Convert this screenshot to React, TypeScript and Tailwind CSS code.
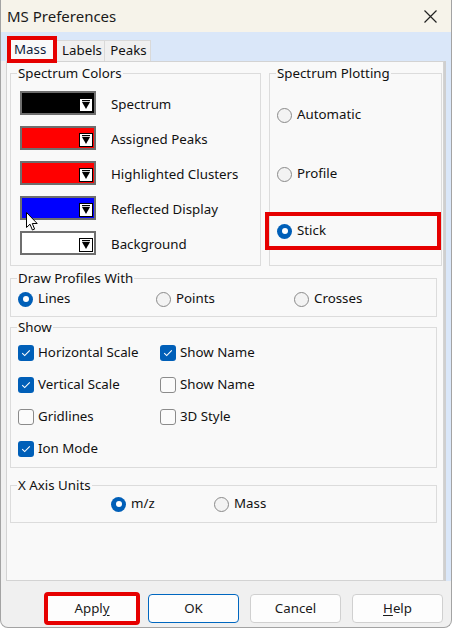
import React from "react";

const font = { fontFamily: '"Noto Sans", "Open Sans", sans-serif' };

type Swatch = { label: string; color: string };

const swatches: Swatch[] = [
  { label: "Spectrum", color: "bg-[#000000]" },
  { label: "Assigned Peaks", color: "bg-[#ff0000]" },
  { label: "Highlighted Clusters", color: "bg-[#ff0000]" },
  { label: "Reflected Display", color: "bg-[#0000ff]" },
  { label: "Background", color: "bg-[#ffffff]" },
];

const Radio = ({ checked }: { checked?: boolean }) =>
  checked ? (
    <span className="flex h-[15px] w-[15px] shrink-0 items-center justify-center rounded-full bg-[#005fb8]">
      <span className="h-[6px] w-[6px] rounded-full bg-white" />
    </span>
  ) : (
    <span className="h-[15px] w-[15px] shrink-0 rounded-full border border-[#8a8a8a] bg-[#f3f3f3]" />
  );

const RadioItem = ({ label, checked }: { label: string; checked?: boolean }) => (
  <div className="flex h-[16px] items-center gap-[5px]">
    <Radio checked={checked} />
    <span className="leading-none">{label}</span>
  </div>
);

const Check = ({ label, checked }: { label: string; checked?: boolean }) => (
  <div className="flex h-[16px] items-center gap-[4px]">
    {checked ? (
      <span className="flex h-[16px] w-[16px] shrink-0 items-center justify-center rounded-[3px] bg-[#005fb8]">
        <svg width="10" height="8" viewBox="0 0 10 8" fill="none">
          <path d="M1.2 4.2 L3.7 6.6 L8.8 1.4" stroke="white" strokeWidth="1.1" />
        </svg>
      </span>
    ) : (
      <span className="h-[16px] w-[16px] shrink-0 rounded-[3px] border border-[#8b8b8b] bg-[#fbfbfb]" />
    )}
    <span className="leading-none">{label}</span>
  </div>
);

const Group = ({
  title,
  className,
  children,
}: {
  title: string;
  className: string;
  children: React.ReactNode;
}) => (
  <fieldset className={`border border-[#dcdcdc] ${className}`}>
    <legend className="ml-[6px] px-[1px] text-[13.3px] leading-[16px]">{title}</legend>
    {children}
  </fieldset>
);

const ColorSwatch = ({ color }: { color: string }) => (
  <div className={`relative h-[24px] w-[76px] shrink-0 border-2 border-[#6e6e6e] ${color}`}>
    <span className="absolute bottom-[1px] right-[1px] flex h-[14px] w-[14px] items-start justify-center border border-black bg-white">
      <svg width="10" height="11" viewBox="0 0 10 11">
        <rect x="1" y="1" width="8" height="1.2" fill="black" />
        <path d="M1 3 L9 3 L5 10 Z" fill="black" />
      </svg>
    </span>
  </div>
);

// mouse pointer resting on the "Reflected Display" swatch
const Cursor = () => (
  <svg
    className="absolute left-[19px] top-[150px] z-20"
    width="13"
    height="20"
    viewBox="0 0 13 20"
  >
    <path
      d="M0.5 0.5 L0.5 15.5 L4 12.2 L6.4 18 L8.6 17.1 L6.3 11.5 L11.2 11.5 Z"
      fill="white"
      stroke="black"
      strokeWidth="1"
      strokeLinejoin="round"
    />
  </svg>
);

const Button = ({
  children,
  className,
}: {
  children: React.ReactNode;
  className?: string;
}) => (
  <button
    className={`flex h-[29px] w-[91px] items-center justify-center rounded-[4px] border bg-[#fdfdfd] text-[13.3px] text-[#1a1a1a] ${className ?? "border-[#d0d0d0]"}`}
  >
    {children}
  </button>
);

const App = () => {
  return (
    <div className="relative h-[633px] w-[452px] overflow-hidden bg-white text-[#111]" style={font}>
      <div className="flex h-[628px] flex-col overflow-hidden rounded-b-[8px] border-x border-b border-[#a3a3a3] bg-[#f0f0f0]">
        {/* title bar */}
        <div className="flex h-[32px] shrink-0 items-center justify-between bg-[#f6f3ea] pl-[6px] pr-[14px]">
          <span className="text-[15px] leading-none text-[#1a1a1a]">MS Preferences</span>
          <svg width="13" height="13" viewBox="0 0 13 13">
            <path d="M0.5 0.5 L12.5 12.5 M12.5 0.5 L0.5 12.5" stroke="#222" strokeWidth="1.2" />
          </svg>
        </div>

        {/* tab strip */}
        <div className="flex h-[29px] shrink-0 items-end bg-[#dae7f9] pl-[6px] text-[13.3px]">
          <div className="relative z-10 -mb-[2px] flex h-[27px] w-[50px] items-start border-4 border-[#e60000] bg-[#f9f9f9] pl-[3px] pt-[1px] leading-[17px] text-[#0d1a3a]">
            Mass
          </div>
          <div className="flex h-[21px] w-[48px] items-center justify-center border-r border-t border-[#d9d9d9] bg-[#f0f0f0] pl-[3px] leading-none">
            Labels
          </div>
          <div className="flex h-[21px] w-[46px] items-center justify-center border-r border-t border-[#d9d9d9] bg-[#f0f0f0] pl-[2px] leading-none">
            Peaks
          </div>
        </div>

        <div className="flex h-[520px] shrink-0">
          <div className="w-[5px] bg-[#f0f0f0]" />
          {/* tab page */}
          <div className="relative flex h-[520px] w-[438px] flex-col border border-[#d3d3d3] bg-[#f9f9f9] pl-[3px] text-[13.3px] shadow-[2px_0_0_#cfcfcf]">
            <Cursor />
            <div className="mt-[3px] flex gap-[8px]">
              <Group title="Spectrum Colors" className="h-[201px] w-[251px]">
                <div className="mt-[10px] flex flex-col gap-[11px] pl-[9px]">
                  {swatches.map((s) => (
                    <div key={s.label} className="flex items-center">
                      <ColorSwatch color={s.color} />
                      <span className="ml-[15px] mt-[3px] leading-none">{s.label}</span>
                    </div>
                  ))}
                </div>
              </Group>

              <Group title="Spectrum Plotting" className="h-[201px] w-[173px]">
                <div className="flex flex-col">
                  <div className="mt-[26px] pl-[7px]">
                    <RadioItem label="Automatic" />
                  </div>
                  <div className="mt-[43px] pl-[7px]">
                    <RadioItem label="Profile" />
                  </div>
                  <div className="-ml-[5px] mt-[30px] flex h-[38px] w-[176px] items-center border-4 border-[#e60000] pl-[8px]">
                    <RadioItem label="Stick" checked />
                  </div>
                </div>
              </Group>
            </div>

            <Group title="Draw Profiles With" className="mt-[4px] h-[47px] w-[427px]">
              <div className="mt-[5px] grid grid-cols-[138px_138px_1fr] pl-[7px]">
                <RadioItem label="Lines" checked />
                <RadioItem label="Points" />
                <RadioItem label="Crosses" />
              </div>
            </Group>

            <Group title="Show" className="mt-[2px] h-[149px] w-[427px]">
              <div className="mt-[10px] grid grid-cols-[142px_1fr] gap-y-[16px] pl-[7px]">
                <Check label="Horizontal Scale" checked />
                <Check label="Show Name" checked />
                <Check label="Vertical Scale" checked />
                <Check label="Show Name" />
                <Check label="Gridlines" />
                <Check label="3D Style" />
                <Check label="Ion Mode" checked />
              </div>
            </Group>

            <Group title="X Axis Units" className="mt-[9px] h-[46px] w-[427px]">
              <div className="mt-[3px] flex pl-[100px]">
                <div className="w-[103px]">
                  <RadioItem label="m/z" checked />
                </div>
                <RadioItem label="Mass" />
              </div>
            </Group>
          </div>
          <div className="flex-1 bg-[#dae7f9]" />
        </div>

        {/* dialog buttons */}
        <div className="mt-[11px] flex items-center pl-[43px]">
          <Button className="mr-[8px] h-[33px] w-[96px] border-4 border-[#e60000]">
            Appl<span className="underline underline-offset-2">y</span>
          </Button>
          <Button className="mr-[11px] border-[#0067c0]">OK</Button>
          <Button className="mr-[11px] border-[#d0d0d0]">Cancel</Button>
          <Button>
            <span className="underline underline-offset-2">H</span>elp
          </Button>
        </div>
      </div>
    </div>
  );
};

export default App;
